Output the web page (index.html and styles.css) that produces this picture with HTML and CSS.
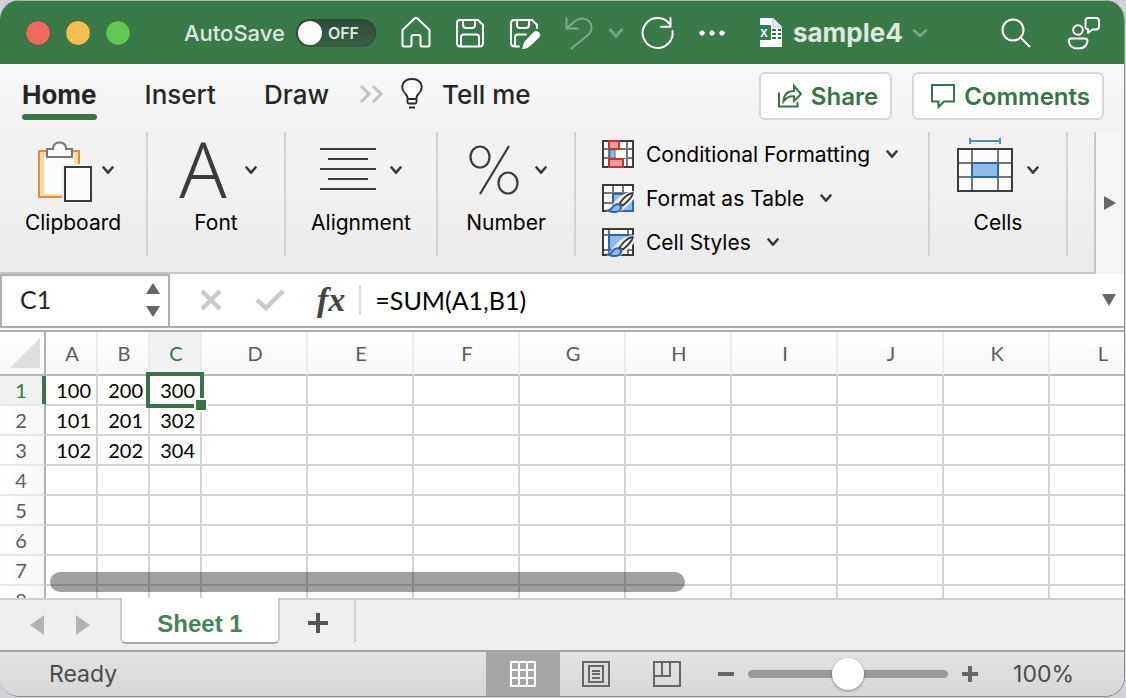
FILE: index.html
```html
<!DOCTYPE html>
<html lang="en">
<head>
<meta charset="utf-8">
<title>sample4</title>
<link rel="stylesheet" href="styles.css">
</head>
<body>
<svg class="defs" aria-hidden="true">
  <symbol id="chev" viewBox="0 0 12 10"><path d="M1.500 2.500 6 7.700l4.500-5.200" fill="none" stroke="currentColor" stroke-width="2.600" stroke-linecap="round" stroke-linejoin="round"/></symbol>
  <symbol id="brush" viewBox="0 0 32 30">
    <path d="M11 21C17 13 24 9 33 8v7C27 21 23 27 15 30H4Z" fill="#f1f1f1"/>
    <path d="M17.500 20.500C22 14 27 10.500 30.700 10c.5 2-4.500 8-9.700 12.500Z" fill="#fff" stroke="#3b3b3b" stroke-width="1.800"/>
    <path d="M6 27.500c4-.5 4.500-5 8-6 3-.8 6 1.500 5 4-1.500 4-8 4.500-13 2Z" fill="#8fbce8" stroke="#2b66b0" stroke-width="2"/>
  </symbol>
</svg>
<div class="window">
  <header class="titlebar">
    <div class="lights">
      <button class="light red" aria-label="Close"></button>
      <button class="light yellow" aria-label="Minimize"></button>
      <button class="light green" aria-label="Zoom window"></button>
    </div>
    <label class="autosave"><span>AutoSave</span>
      <span class="switch"><input type="checkbox"><span class="knob"></span><span class="off">OFF</span></span>
    </label>
    <div class="quick">
      <button aria-label="Home"><svg class="i32" viewBox="0 0 32 32"><path d="M2.500 13 14.500 1.500q1.500-1.300 3 0L29.500 13v15q0 1.500-1.500 1.500h-6q-1.500 0-1.500-1.500v-8q0-2-2-2h-5q-2 0-2 2v8q0 1.500-1.500 1.500H4q-1.500 0-1.500-1.500Z"/></svg></button>
      <button aria-label="Save"><svg class="i32" viewBox="0 0 32 32"><path d="M6 3h18l5 5v18q0 3.500-3.500 3.500h-19Q3 29.500 3 26V6q0-3 3-3ZM9 3v5q0 3 3 3h6q3 0 3-3V3M7 29V20q0-2.500 2.500-2.500h13Q25 17.500 25 20v9"/></svg></button>
      <button aria-label="Save as"><svg class="i32" viewBox="0 0 32 32"><path d="M11 29.500H7Q3 29.500 3 26V6q0-3 3-3h18l5 5v3M9 3v5q0 3 3 3h6q3 0 3-3V3M7 29V20q0-2.500 2.500-2.500H18"/><path class="solid" d="M15 31.500q0-4.500 2.500-7.500L26 15.200q2.500-1.700 4.800.3 1.800 2.300.2 4.700l-8.700 8.300q-3 2.800-7.300 3Z"/></svg></button>
      <button aria-label="Undo" disabled><svg class="i32" viewBox="0 0 32 32"><path d="M4.500 1v10.500H16M5 11 13.500 3.700C23-3.500 35 7.500 27 17L9.500 31.500"/></svg></button>
      <button class="drop" aria-label="Undo history" disabled><svg class="i16" viewBox="0 0 12 10"><use href="#chev"/></svg></button>
      <button class="redo" aria-label="Repeat"><svg class="i32" viewBox="0 0 32 32"><path d="M30.500 14a15 15 0 1 1-3-7.200M28.500 1v8.700H19"/></svg></button>
      <button class="more" aria-label="More"><svg class="i32" viewBox="0 0 32 32"><g class="solid"><circle cx="6" cy="16" r="2.200"/><circle cx="16" cy="16" r="2.200"/><circle cx="26" cy="16" r="2.200"/></g></svg></button>
    </div>
    <button class="doc">
      <svg width="28" height="32" viewBox="0 0 28 32"><path d="M4 1h13l9 9v20H4Z" fill="#fff"/><path d="M17 1v9h9" fill="#eee" stroke="#c4c4c4"/><path d="M16 13h4m2 0h3M16 17h4m2 0h3M16 21h4m2 0h3" stroke="#2f7048" stroke-width="2"/><rect x="1" y="8" width="14" height="15" rx="1" fill="#337c4d"/><text x="8" y="20" text-anchor="middle" class="mini">X</text></svg>
      <span>sample4</span>
      <svg class="i16" viewBox="0 0 16 10"><path d="M2 2.500 8 8l6-5.500" fill="none" stroke="currentColor" stroke-width="2.600" stroke-linecap="round"/></svg>
    </button>
    <div class="right-tools">
      <button aria-label="Search"><svg class="i32" viewBox="0 0 32 32"><circle cx="13" cy="13" r="10.500"/><path d="M20.500 20.500 29.500 29.500"/></svg></button>
      <button aria-label="Presence"><svg class="i32" viewBox="0 0 32 32"><circle cx="10" cy="13" r="4.800"/><path d="M3 21.500h14q2.500 0 2.500 2.500-1 7.500-9.500 7.500T.8 24q0-2.500 2.200-2.500ZM20 1h8q3 0 3 3v5.500q0 3-3 3h-3.500l-4.500 3.500v-3.700q-2.500-.3-2.500-2.800V4q0-3 2.500-3Z"/></svg></button>
    </div>
  </header>

  <div class="ribbon">
    <nav class="tabs">
      <button class="tab active">Home</button>
      <button class="tab">Insert</button>
      <button class="tab">Draw</button>
      <button class="overflow" aria-label="More tabs"><svg width="24" height="20" viewBox="0 0 24 20"><path d="m2 2 8 8-8 8M14 2l8 8-8 8" fill="none" stroke="#c2c2c2" stroke-width="3"/></svg></button>
      <button class="tell"><svg width="24" height="34" viewBox="0 0 24 34"><path d="M7.500 25v-4q0-2-2-4C-1.500 9 4 2 12 2s13.500 7 6.500 15q-2 2-2 4v4q0 1.500-1.500 1.500H9Q7.500 26.500 7.500 25Zm0-3h9" fill="#fff" stroke="#2a2a2a" stroke-width="1.800"/><path d="M9 30.500h6" stroke="#2a2a2a" stroke-width="2"/></svg><span>Tell me</span></button>
      <div class="actions">
        <button class="action"><svg width="26" height="26" viewBox="0 0 26 26" class="act"><path d="M2 9.500v14h18.500V19M6.500 18.500Q7 8 17 8V3l7 8-7 7v-4.500Q11 12.500 6.500 18.500Z"/></svg><span>Share</span></button>
        <button class="action"><svg width="26" height="26" viewBox="0 0 26 26" class="act"><path d="M2 2h22v16.500H14L8.500 24v-5.500H2Z"/></svg><span>Comments</span></button>
      </div>
    </nav>
    <div class="tools">
      <div class="strip">
        <button class="group first"><span class="glyph">
          <svg class="big" viewBox="0 0 56 64"><rect x="7" y="13" width="40" height="46" fill="#f5dd9b" stroke="#dd8b45" stroke-width="2"/><path d="M12 18h30v38H12Z" fill="#fbfbfb"/><path d="M15 19v-8h6q0-6.500 6.500-6.500T34 11h6v8Z" fill="#fafafa" stroke="#777" stroke-width="2"/><path d="M30 26h32v38H30Z" fill="#f0f0f0"/><rect x="33" y="29" width="26" height="34" fill="#fbfbfb" stroke="#3b3b3b" stroke-width="2"/></svg>
          <svg class="chev"><use href="#chev"/></svg></span><span class="caption">Clipboard</span></button>
        <button class="group"><span class="glyph">
          <svg class="big" viewBox="0 0 56 64"><text class="letter" x="28" y="60" text-anchor="middle">A</text></svg>
          <svg class="chev"><use href="#chev"/></svg></span><span class="caption">Font</span></button>
        <button class="group wide"><span class="glyph">
          <svg class="big" viewBox="0 0 56 64"><path d="M0 11h56M8 21h40M0 31h56M8 41h40M0 51h56" stroke="#3b3b3b" stroke-width="2"/></svg>
          <svg class="chev"><use href="#chev"/></svg></span><span class="caption">Alignment</span></button>
        <button class="group"><span class="glyph">
          <svg class="big" viewBox="0 0 56 64"><g fill="none" stroke="#3b3b3b" stroke-width="2.200"><ellipse cx="15" cy="19" rx="9.500" ry="10.500"/><ellipse cx="43" cy="45" rx="9.500" ry="10.500"/><line x1="44" y1="8" x2="15" y2="56"/></g></svg>
          <svg class="chev"><use href="#chev"/></svg></span><span class="caption">Number</span></button>
        <div class="styles">
          <button class="row"><svg width="32" height="30" viewBox="0 0 32 30"><rect x="1" y="2" width="30" height="26" fill="#fff" stroke="#3b3b3b" stroke-width="2"/><path d="M2 10h28M2 19h28M7 3v24M25 3v24" stroke="#777" stroke-width="2" fill="none"/><path d="M8 11h5v8H8Z" fill="#8fbce8" stroke="#3478c0"/><path d="M14 11h10v8H14Z" fill="#fff"/><path d="M7 2h10v8H7ZM7 20h14v8H7Z" fill="#f09a9a" stroke="#c5362c" stroke-width="2"/></svg><span>Conditional Formatting</span><svg class="chev"><use href="#chev"/></svg></button>
          <button class="row"><svg width="32" height="30" viewBox="0 0 32 30"><rect x="1" y="2" width="30" height="26" fill="#fff" stroke="#3b3b3b" stroke-width="2"/><path d="M11 10h20v18H11Z" fill="#8fbce8"/><path d="M2 10h28M2 20h10M11 3v24M21 3v8" stroke="#777" stroke-width="2"/><path d="M11 20v-9h19M31 16v12H19" fill="none" stroke="#2b66b0" stroke-width="2"/><use href="#brush"/></svg><span>Format as Table</span><svg class="chev"><use href="#chev"/></svg></button>
          <button class="row"><svg width="32" height="30" viewBox="0 0 32 30"><rect x="1" y="2" width="30" height="26" fill="#fff" stroke="#3b3b3b" stroke-width="2"/><path d="M2 8h28M2 23h28M7 3v24M26 3v24" stroke="#777" stroke-width="2"/><path d="M7 8h19v15H7Z" fill="#8fbce8" stroke="#2b66b0" stroke-width="2"/><use href="#brush"/></svg><span>Cell Styles</span><svg class="chev"><use href="#chev"/></svg></button>
        </div>
        <button class="group"><span class="glyph">
          <svg class="big" viewBox="0 0 56 64"><path d="M13 3h30M13 0v6M43 0v6" stroke="#4590cd" stroke-width="2"/><rect x="1" y="11" width="54" height="42" fill="#fbfbfb" stroke="#3b3b3b" stroke-width="2"/><path d="M2 25h52M2 39h52M15 12v40M41 12v40" stroke="#777" stroke-width="2"/><rect x="15" y="25" width="26" height="14" fill="#8fbce8" stroke="#2b66b0" stroke-width="2"/></svg>
          <svg class="chev"><use href="#chev"/></svg></span><span class="caption">Cells</span></button>
      </div>
      <button class="scroll" aria-label="Scroll ribbon"><svg width="12" height="14" viewBox="0 0 12 14"><path d="M0 0v14l12-7Z" fill="#666"/></svg></button>
    </div>
  </div>

  <div class="formula-bar">
    <div class="namebox"><input type="text" value="C1" aria-label="Name box"><button aria-label="Choose name"><svg width="14" height="36" viewBox="0 0 14 36"><path d="M0 11 7 0l7 11ZM0 23h14L7 34Z" fill="#666"/></svg></button></div>
    <button aria-label="Cancel"><svg width="24" height="24" viewBox="0 0 24 24"><path d="m3 3 18 18M21 3 3 21" stroke="#cacaca" stroke-width="4.500"/></svg></button>
    <button class="accept" aria-label="Enter"><svg width="30" height="24" viewBox="0 0 30 24"><path d="m2 12 9 8L28 3" fill="none" stroke="#cacaca" stroke-width="4.500"/></svg></button>
    <button class="fx" aria-label="Insert function">fx</button>
    <input class="formula" type="text" value="=SUM(A1,B1)" aria-label="Formula">
    <button class="expand" aria-label="Expand formula bar"><svg width="14" height="12" viewBox="0 0 14 12"><path d="M0 0h14L7 12Z" fill="#666"/></svg></button>
  </div>
  <div class="splitter"></div>

  <main class="sheet">
    <table class="grid">
      <colgroup><col class="c-head"><col class="c-small" span="3"><col class="c-wide" span="9"></colgroup>
      <thead><tr><th class="corner" aria-label="Select all"><svg width="30" height="30" viewBox="0 0 30 30"><path d="M30 0v30H0Z" fill="#dedede"/></svg></th><th>A</th><th>B</th><th class="on">C</th><th>D</th><th>E</th><th>F</th><th>G</th><th>H</th><th>I</th><th>J</th><th>K</th><th>L</th></tr></thead>
      <tbody>
        <tr><th class="on">1</th><td>100</td><td>200</td><td class="selected">300<span class="selection"></span><span class="handle"></span></td><td></td><td></td><td></td><td></td><td></td><td></td><td></td><td></td><td></td></tr>
        <tr><th>2</th><td>101</td><td>201</td><td>302</td><td></td><td></td><td></td><td></td><td></td><td></td><td></td><td></td><td></td></tr>
        <tr><th>3</th><td>102</td><td>202</td><td>304</td><td></td><td></td><td></td><td></td><td></td><td></td><td></td><td></td><td></td></tr>
        <tr><th>4</th><td></td><td></td><td></td><td></td><td></td><td></td><td></td><td></td><td></td><td></td><td></td><td></td></tr>
        <tr><th>5</th><td></td><td></td><td></td><td></td><td></td><td></td><td></td><td></td><td></td><td></td><td></td><td></td></tr>
        <tr><th>6</th><td></td><td></td><td></td><td></td><td></td><td></td><td></td><td></td><td></td><td></td><td></td><td></td></tr>
        <tr><th>7</th><td></td><td></td><td></td><td></td><td></td><td></td><td></td><td></td><td></td><td></td><td></td><td></td></tr>
        <tr><th>8</th><td></td><td></td><td></td><td></td><td></td><td></td><td></td><td></td><td></td><td></td><td></td><td></td></tr>
      </tbody>
    </table>
    <div class="scrollbar"></div>
  </main>

  <div class="sheet-tabs">
    <div class="arrows">
      <button aria-label="Previous sheet"><svg width="14" height="20" viewBox="0 0 14 20"><path d="M14 0v20L0 10Z" fill="#b4b4b4"/></svg></button>
      <button aria-label="Next sheet"><svg width="14" height="20" viewBox="0 0 14 20"><path d="M0 0v20l14-10Z" fill="#b4b4b4"/></svg></button>
    </div>
    <button class="sheet-tab">Sheet 1</button>
    <button class="add" aria-label="Add sheet"><svg width="20" height="20" viewBox="0 0 20 20"><path d="M10 0v20M0 10h20" stroke="#555" stroke-width="4"/></svg></button>
  </div>

  <footer class="status">
    <span>Ready</span>
    <div class="views">
      <button class="view active" aria-label="Normal view"><svg width="28" height="28" viewBox="0 0 28 28"><path d="M2 2h24v24H2ZM10 2v24M18 2v24M2 10h24M2 18h24" fill="none" stroke="#fff" stroke-width="2"/></svg></button>
      <button class="view" aria-label="Page layout"><svg width="28" height="28" viewBox="0 0 28 28"><path d="M1 2h26v24H1ZM7 6h14v16H7ZM10 11h8M10 14h8M10 18h8" fill="none" stroke="#666" stroke-width="2"/></svg></button>
      <button class="view" aria-label="Page break preview"><svg width="28" height="28" viewBox="0 0 28 28"><path d="M1 2h26v24H1ZM1 16h16V2M9 2v14" fill="none" stroke="#666" stroke-width="2"/></svg></button>
    </div>
    <div class="zoom">
      <button aria-label="Zoom out"><svg width="16" height="16" viewBox="0 0 16 16"><path d="M0 8h16" stroke="#666" stroke-width="4"/></svg></button>
      <input type="range" min="0" max="200" value="100" aria-label="Zoom">
      <button aria-label="Zoom in"><svg width="16" height="16" viewBox="0 0 16 16"><path d="M0 8h16M8 0v16" stroke="#666" stroke-width="4"/></svg></button>
    </div>
    <span class="percent">100%</span>
  </footer>
</div>
</body>
</html>
```
FILE: styles.css
```css
* { box-sizing: border-box; }
html, body { height: 100%; }
body {
  margin: 0;
  padding: 0 1px 1px 0;
  background: #d3d1d6;
  font-family: Inter, "Liberation Sans", sans-serif;
  color: #262626;
}
button, input { font: inherit; color: inherit; border: 0; background: none; padding: 0; margin: 0; }
button { display: flex; align-items: center; flex-shrink: 0; }
svg { display: block; flex-shrink: 0; overflow: visible; }
.defs { position: absolute; width: 0; height: 0; }

.window {
  display: flex;
  flex-direction: column;
  height: 100%;
  overflow: hidden;
  border-right: 1px solid #8f8f8f;
  border-bottom: 1px solid #8f8f8f;
  border-radius: 20px;
  background: #efefef;
}

/* Title bar */
.titlebar {
  display: flex;
  align-items: center;
  flex-shrink: 0;
  height: 64px;
  padding: 0 24px 0 25px;
  border-top: 1px solid #9cbda6;
  background: #3a7a49;
  color: #dcebdf;
}
.lights { display: flex; gap: 14px; }
.light { width: 26px; height: 26px; border-radius: 50%; border: 1px solid #2e6a3a; }
.red { background: #ed6a5e; }
.yellow { background: #f5bf4f; }
.green { background: #61c654; }
.autosave { display: flex; align-items: center; gap: 11px; margin-left: 53px; font-size: 22px; font-weight: 500; }
.switch {
  position: relative;
  display: flex;
  align-items: center;
  width: 80px;
  height: 28px;
  border-radius: 14px;
  background: linear-gradient(#2c4c36, #3c5f48);
  box-shadow: inset 0 0 2px #1d3d27;
}
.switch input { position: absolute; inset: 0; width: 100%; height: 100%; opacity: 0; }
.knob { width: 24px; height: 24px; margin-left: 2px; border-radius: 50%; background: #fbfbfb; }
.off { margin-left: 6px; font-size: 16px; font-weight: 600; }
.quick { display: flex; align-items: center; gap: 22px; margin-left: 24px; }
.quick .drop { margin: 0 -4px 0 -8px; }
.quick button:disabled { opacity: .36; }
.i32 { width: 32px; height: 32px; fill: none; stroke: #fff; stroke-width: 2; stroke-linecap: round; stroke-linejoin: round; }
.i32 .solid { fill: #fff; stroke-width: 1; }
.i16 { width: 16px; height: 12px; }
.doc { gap: 9px; margin-left: 28px; font-size: 26px; font-weight: 700; }
.doc .i16 { opacity: .4; }
.mini { font: 700 11px "Liberation Sans", sans-serif; fill: #fff; }
.right-tools { display: flex; gap: 36px; margin-left: auto; }

/* Ribbon */
.ribbon { flex-shrink: 0; background: linear-gradient(#f8f8f8, #f2f2f2 30%, #f1f1f1 60%, #ebebeb); }
.tabs { display: flex; align-items: center; height: 68px; padding: 0 20px 8px 22px; }
.tab { position: relative; height: 52px; margin-right: 48px; font-size: 26px; font-weight: 500; }
.tab.active { font-weight: 700; }
.tab.active::after { content: ""; position: absolute; left: 0; right: 0; bottom: 0; height: 6px; border-radius: 3px; background: #39734b; }
.overflow { margin-left: -18px; }
.tell { gap: 18px; margin-left: 17px; font-size: 26px; font-weight: 500; }
.actions { display: flex; gap: 20px; align-self: flex-start; margin: 8px 0 0 auto; }
.action {
  gap: 8px;
  height: 48px;
  padding: 0 12px 0 16px;
  border: 2px solid #d6d6d6;
  border-radius: 6px;
  background: #fff;
  color: #39734b;
  font-size: 24px;
  font-weight: 600;
}
.act { fill: none; stroke: #39734b; stroke-width: 2; }

.tools { display: flex; }
.strip { display: flex; flex: 1; min-width: 0; height: 142px; overflow: hidden; border-right: 2px solid #c6c6c6; border-bottom: 2px solid #c6c6c6; }
.group, .styles { height: 124px; border-right: 2px solid #d3d3d3; }
.group { flex-direction: column; width: 138px; padding-top: 6px; color: #000; font-size: 21px; }
.group.first { width: 148px; }
.group.wide { width: 152px; }
.glyph { display: flex; align-items: center; gap: 14px; }
.big { width: 56px; height: 64px; }
.chev { width: 12px; height: 10px; color: #3b3b3b; }
.letter { font: 300 78px "Noto Sans", "Open Sans", sans-serif; fill: #3b3b3b; }
.caption { margin-top: 7px; line-height: 28px; }
.styles { display: flex; flex-direction: column; width: 354px; flex-shrink: 0; padding-left: 26px; }
.row { gap: 12px; height: 44px; color: #000; font-size: 21px; }
.row .chev { margin-left: 4px; }
.scroll { justify-content: center; width: 28px; height: 142px; background: #f5f5f5; }

/* Formula bar */
.formula-bar { display: flex; align-items: center; flex-shrink: 0; height: 52px; background: #fff; font-family: Lato, Inter, sans-serif; font-size: 25px; }
.namebox { display: flex; align-items: center; width: 170px; height: 100%; margin-right: 29px; padding-right: 8px; border: 2px solid #b0b0b0; border-bottom: 0; }
.namebox input { flex: 1; min-width: 0; padding: 0 0 4px 18px; }
.accept { margin-left: 32px; }
.fx { height: 30px; margin-left: 32px; padding-right: 14px; border-right: 2px solid #dedede; font: italic 700 34px "Liberation Serif", serif; color: #444; }
.formula { flex: 1; min-width: 0; margin-left: 14px; color: #000; }
.expand { margin-right: 8px; }
.splitter { flex-shrink: 0; height: 6px; border-top: 2px solid #ababab; border-bottom: 2px solid #ababab; background: #f7f7f7; }

/* Grid */
.sheet { position: relative; flex: 1; min-height: 0; overflow: hidden; background: #fff; }
.grid { width: 1156px; table-layout: fixed; border-collapse: separate; border-spacing: 0; font: 20px Lato, Inter, sans-serif; }
.c-head { width: 46px; }
.c-small { width: 52px; }
.c-wide { width: 106px; }
.grid th, .grid td { height: 30px; padding: 0; line-height: 28px; border-right: 2px solid #d4d4d4; border-bottom: 2px solid #d4d4d4; }
.grid th { font-weight: 400; color: #5c5c5c; }
.grid thead th { height: 44px; padding-left: 2px; border-right-color: #ececec; border-bottom-color: #b9b9b9; background: linear-gradient(#fff, #f8f8f8); background-clip: padding-box; }
.grid tbody th { padding-right: 2px; border-right-color: #b0b0b0; border-bottom-color: #e6e6e6; background: linear-gradient(90deg, #fff, #f8f8f8); }
.grid thead .corner { padding: 0 4px 0 10px; border-right-color: #b0b0b0; }
.grid thead th.on { background: #f1f1f1; background-clip: padding-box; color: #39734b; }
.grid tbody th.on { background: #f1f1f1; color: #39734b; border-right-color: #39734b; box-shadow: inset -2px 0 #39734b; }
.grid td { padding-right: 5px; text-align: right; color: #000; }
.grid td.selected { position: relative; }
.selection { position: absolute; inset: -4px; border: 4px solid #39734b; }
.handle { position: absolute; right: -8px; bottom: -8px; width: 14px; height: 14px; border: 2px solid #fff; background: #39734b; }
.scrollbar { position: absolute; left: 50px; bottom: 6px; width: 56.500%; height: 20px; border-radius: 10px; background: rgba(0, 0, 0, .37); }

/* Sheet tabs */
.sheet-tabs { display: flex; flex-shrink: 0; height: 52px; border-top: 2px solid #cfcfcf; background: #efefef; }
.arrows { display: flex; align-items: center; gap: 32px; padding: 0 30px; }
.sheet-tab {
  justify-content: center;
  width: 160px;
  height: 46px;
  margin-top: -2px;
  padding-top: 7px;
  border: 2px solid #cbcbcb;
  border-top: 0;
  border-bottom-color: #a9a9a9;
  border-radius: 0 0 6px 6px;
  background: #fff;
  color: #43845a;
  font: 700 24px "Liberation Sans", sans-serif;
}
.add { height: 42px; padding: 4px 26px 0 28px; border-right: 2px solid #cfcfcf; }

/* Status bar */
.status { display: flex; align-items: center; flex-shrink: 0; height: 46px; padding: 0 50px 0 49px; border-top: 2px solid #a0a0a0; background: linear-gradient(#e3e3e3, #d7d7d7); color: #4b4b4b; font-size: 23px; }
.views { display: flex; height: 100%; margin-left: auto; }
.view { justify-content: center; width: 71px; height: 100%; }
.view.active { width: 74px; background: #a6a6a6; }
.zoom { display: flex; align-items: center; gap: 14px; margin-left: 16px; }
.zoom input { appearance: none; width: 200px; height: 32px; }
.zoom input::-webkit-slider-runnable-track { height: 8px; border-radius: 4px; background: #999; }
.zoom input::-webkit-slider-thumb { appearance: none; width: 32px; height: 32px; margin-top: -12px; border-radius: 50%; background: #fff; box-shadow: 0 1px 3px rgba(0, 0, 0, .4); }
.percent { margin-left: 35px; }
```
